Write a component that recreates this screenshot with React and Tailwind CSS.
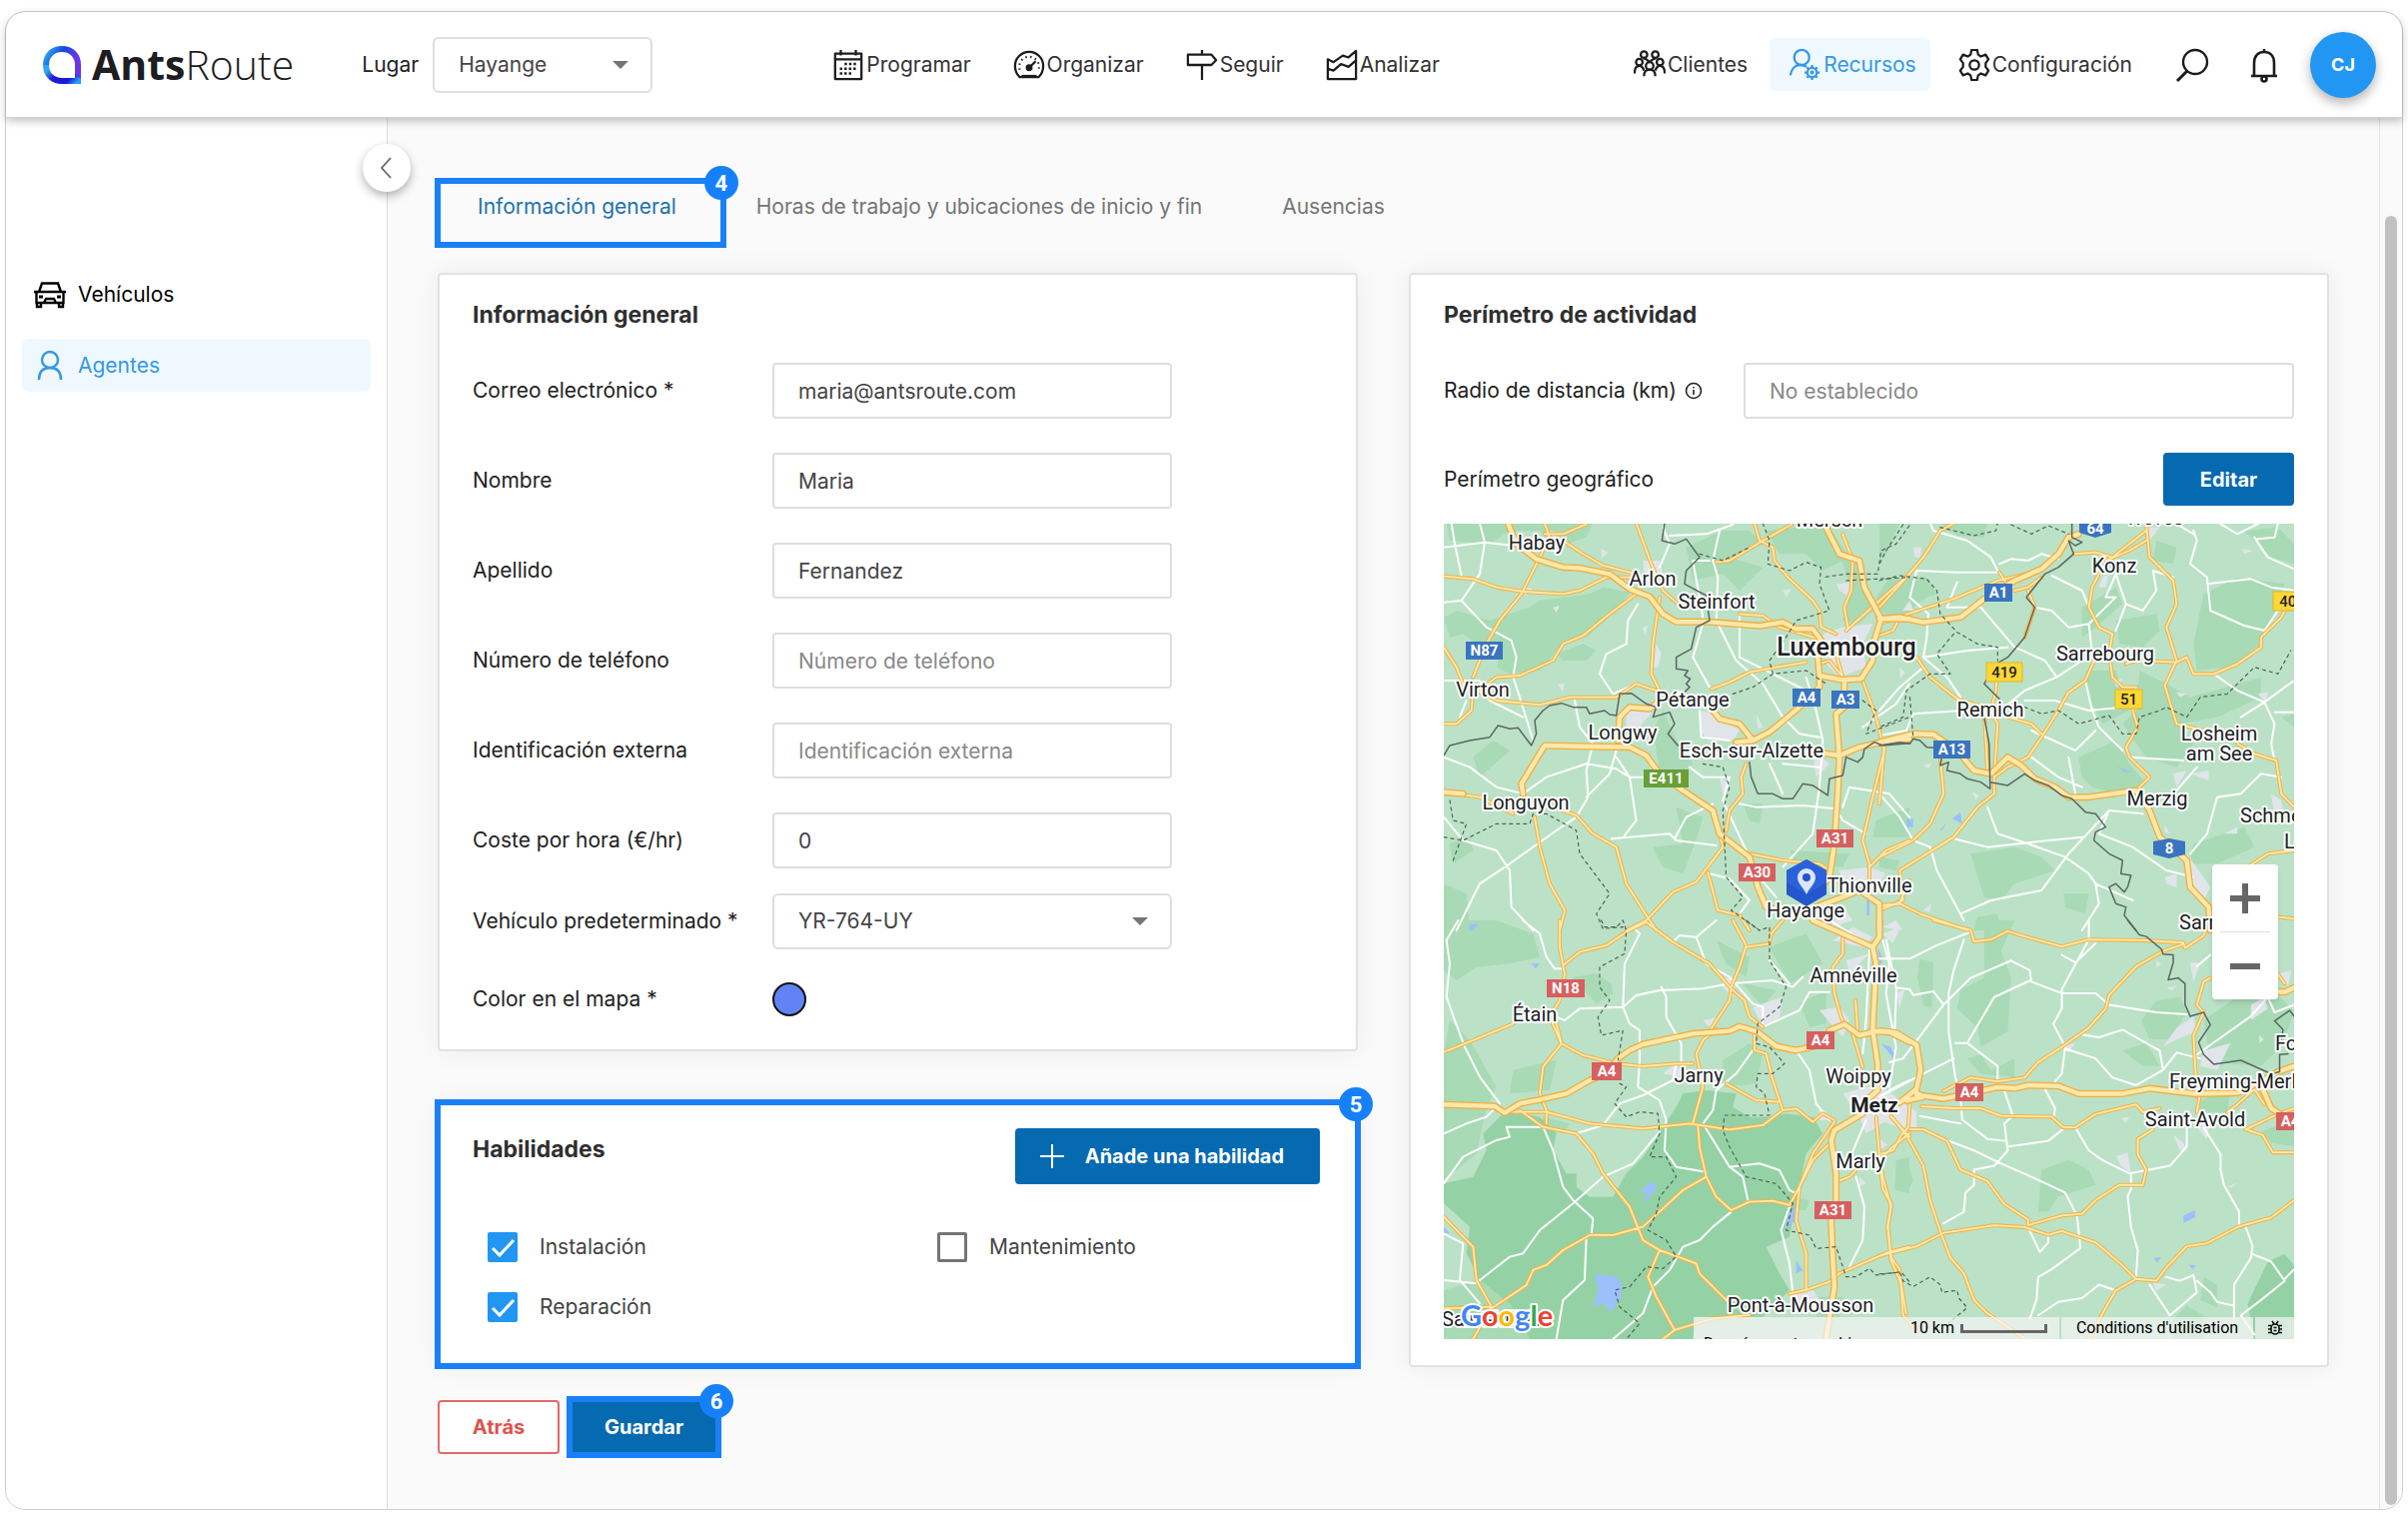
const fields = [
  { id: 'email', label: 'Correo electrónico *', type: 'email', value: 'maria@antsroute.com' },
  { id: 'nombre', label: 'Nombre', type: 'text', value: 'Maria' },
  { id: 'apellido', label: 'Apellido', type: 'text', value: 'Fernandez' },
  { id: 'telefono', label: 'Número de teléfono', type: 'tel', placeholder: 'Número de teléfono' },
  { id: 'externa', label: 'Identificación externa', type: 'text', placeholder: 'Identificación externa' },
  { id: 'coste', label: 'Coste por hora (€/hr)', type: 'text', value: '0' },
];

const skills = [
  { id: 'instalacion', label: 'Instalación', checked: true },
  { id: 'mantenimiento', label: 'Mantenimiento', checked: false },
  { id: 'reparacion', label: 'Reparación', checked: true },
];

// The map is drawn in four quadrants, each in its own coordinate space
const tiles = [
  {
    transform: 'translate(-14 -13) scale(.3333 .3333)',
    woods:
      'M50 38H490L470 80 380 110 330 60 240 60 180 100 60 90Z M300 290L330 270 480 250 520 230 600 245 560 300 470 380 400 400 330 480 240 490 200 470 220 400 150 410 100 370 60 380 42 320 80 300 180 330Z M770 110L880 60 960 60 1000 100 900 140 1000 170 930 240 880 190 790 210Z M1010 60L1100 50 1200 50 1260 140 1180 180 1130 130 1050 130Z M1230 130L1290 150 1300 230 1330 300 1290 340 1240 330 1260 220Z M1380 200H1440V320L1360 310 1340 260Z M700 600L740 690 790 760 740 830 690 780 670 660Z M940 880L1000 880 990 940 960 930Z M740 890L820 920 800 990 760 1090 700 1070 670 1010 760 1000Z M1340 930L1440 890V980L1330 980Z M42 1120L110 1150 120 1260H42Z M60 1000L120 980 130 1020 70 1060Z M1080 1020L1260 1030 1240 1070 1100 1060Z M130 740L190 690 240 720 150 800Z M380 430L460 400 500 420 470 450 400 450Z',
    park: '',
    water: 'M1430 930L1440 920V950Z M115 1250L145 1240 130 1260H118Z M1312 1160H1320V1215H1312Z',
    urban:
      'M640 150L690 150 710 230 650 230Z M1180 370L1240 350 1330 340 1300 400 1310 470 1230 500 1190 460Z M590 600L670 600 720 520 690 580 620 660 590 660Z M810 600L860 610 930 660 910 690 830 680 810 660Z M1230 1080L1320 1070 1370 1090 1320 1150 1240 1130Z M1150 720L1200 760 1160 800Z M1220 220L1270 215 1260 260 1230 240Z M515 115L535 125 515 145Z M370 290L390 285 380 305Z M640 350L655 345 645 375Z M680 400L695 430 685 470 672 470Z M385 520L405 520 398 545Z M360 60L385 65 370 90Z M980 610L1000 650 985 655Z M870 800L900 820 880 850Z M1060 240L1085 235 1070 260Z M1205 1250L1240 1190 1270 1230Z M285 230L310 235 285 255Z',
    minor:
      'M65 38L75 100 95 195 M150 38L165 95 150 190 95 270 42 275 M42 110L165 95 250 105 M95 270L170 350 245 390 260 440 250 500 270 560 310 690 M42 510L150 510 180 570 280 620 M625 280L595 330 590 400 530 430 510 490 550 550 620 520 M700 50L720 100 690 170 M720 75L830 70 910 42 M870 60L850 150 865 200 860 330 920 450 1000 520 1060 620 1110 670 1170 680 M840 150L790 150 820 320 M930 310V440L1130 540 M820 340L790 440 840 530 M1130 500L1160 600 1180 690 1170 830 1160 900 1150 970 1060 1070 M42 740L120 770 200 830 280 850 350 800 470 760 560 775 600 800 640 800 M435 570L450 650 490 700 470 780 475 860 440 920 380 960 240 1060 150 1120 80 1260 M560 720L540 790 470 860 M560 740L600 800 620 930 585 975 M42 920L100 990 200 1020 240 1080 245 1190 310 1260 M545 985L720 970 740 990 860 1005 M735 985L770 920 850 880 M930 880L980 890 1120 885 1220 895 1240 930 1310 970 M810 600L815 680 900 690 M1240 890L1260 830 1380 850 1440 920 M840 1090L900 1105 960 1170 930 1210 M980 1090L1040 1160 M1440 520L1400 580 1300 650 M1020 760L1060 850 M1060 760L1170 770 M90 620L110 570 M780 770L820 800 900 800 880 870 950 1020',
    roads:
      'M345 38L360 80 320 160 275 250 210 330 170 400 130 500 M345 70L400 70 470 40 M400 90L460 130 520 165 620 190 M42 197L130 205 200 230 280 243 400 250 450 240 530 200 600 200 M620 250L540 310 460 375 400 400 370 450 270 495 200 500 150 540 M42 410L80 470 100 520 200 570 330 583 420 560 560 560 620 520 680 540 690 560 M42 640L80 640 125 600 130 540 M620 38L665 160 700 240 740 275 M690 260L670 400 665 490 690 540 M845 535L900 515 960 485 1040 470 1130 455 M975 38L990 90 1030 110 1035 150 1075 200 1150 270 1170 300 1175 350 1220 370 M860 155L900 150 1000 90 1085 42 M1240 70L1270 150 1265 240 1245 290 1255 350 M1440 190L1350 270 1250 360 M42 845L150 860 250 910 M370 890L440 915 490 970 560 1010 590 1120 660 1230 M315 920L330 1010 360 1120 405 1200 390 1260 M590 1260L650 1230 730 1145 800 1115 880 1010 870 970 M835 1085L865 1200 930 1215 960 1260 M950 760L935 800 940 850 900 900 890 960 M960 1030L1060 1050 1170 1060 1200 1080 M1300 510L1340 620 1365 720 1330 860 1300 990 1320 1060 1320 1140 M1440 990L1370 1020 1320 1070 M1350 1190L1410 1180 1440 1110 M930 310L1000 315 1050 350 1170 385 M1170 460L1200 450 1240 500 1220 430 M660 1230L680 1260',
    highways:
      'M235 38L260 100 320 145 400 170 450 172 540 190 600 235 660 258 700 310 740 334 840 334 990 346 1060 335 1100 355 1150 355 1190 410 1165 440 1170 495 1240 508 1295 505 1330 450 1335 390 1355 325 1440 325 M1190 50L1230 130 1290 150 1305 230 1355 325 M1170 500V530L1110 590 1020 665 970 690 930 640 870 625 830 575 M970 690L920 695 M1245 510V590L1220 610 1230 740 1225 850 1215 1000 1200 1100 1150 1160 M1180 728L1230 735 1290 710 1360 695 1440 685 M280 850L275 820 345 705 480 708 600 710 650 735 690 790 760 840 850 900 870 970 960 1040 985 1130 1010 1190 1070 1200 M565 690L570 620 600 590 660 595 680 580 M1160 1190L1240 1160 1290 1140 1350 1180 1350 1260 M42 845L100 850',
    border:
      'M705 38L697 90 735 100 770 85 810 140 770 180 765 220 830 255 840 330 800 350 785 415 740 440 740 475 775 480 765 495 782 505 770 520 780 530 740 570 M42 735L60 705 120 690 180 680 205 645 240 655 265 652 305 705 320 670 315 630 340 600 360 585 395 578 430 590 470 590 480 610 525 600 540 612 560 615 570 550 605 548 650 580 680 590 670 620 720 605 735 640 715 670 745 705 M960 755L965 800 985 850 1030 850 1060 865 1090 865 1120 820 1150 825 1195 855 1200 805 1240 795 1250 740 1285 755 1300 740 1305 715 1335 695 1360 705 1440 698',
    dashed:
      'M1000 38L1020 90 1015 160 1080 180 1130 155 1175 170 1170 220 1200 300 1150 315 1100 330 1070 380 1020 450 1030 490 1130 480 1190 520 M810 130L880 150 960 110 M1440 45L1400 100 1355 120 1345 190 1250 190 1180 200 M1250 210L1440 200 M910 550L970 530 1030 490 M820 760L880 770 900 830 880 900 890 1100 940 1160 905 1200 990 1260 M42 980L100 990 200 940 300 940 310 910 350 910 440 960 450 1030 540 1150 500 1210 520 1255 580 1250 M60 870L70 930 110 940 70 1050 M1300 570L1340 600 1310 670 1440 620',
  },
  {
    transform: 'translate(436 -13) scale(.338 .3333)',
    woods:
      'M0 38L60 38 20 130 0 150Z M40 220L80 200 140 200 170 250 140 260 60 320 30 300Z M820 90L880 110 870 160 810 150Z M180 38H320L310 80 230 75Z M600 290L700 230 720 280 640 350 600 380Z M700 330L820 310 830 360 780 410 710 400Z M960 250L1060 200 1200 220 1160 330 1130 400 1040 470 940 480 930 400Z M770 480L850 520 920 560 1130 500 1130 560 1000 620 890 640 930 700 880 770 790 740 720 640 760 600Z M610 480L700 480 740 600 660 640 620 560Z M590 740L700 690 740 760 790 820 700 850 630 830 600 800Z M270 1030L400 1010 480 1040 520 1080 400 1120 360 1170 310 1160Z M930 1000L1080 950 1110 1010 1000 1060 920 1060Z M545 1150L620 1150 610 1210 550 1190Z M290 1220L350 1210 360 1260H280Z M1080 60L1180 50 1228 100V160L1160 140Z M1190 620L1228 610V650Z M0 1040L60 1050 50 1080 0 1070Z',
    park: '',
    water: 'M80 930L100 925 100 950 82 948Z M240 905L245 940 215 925Z M178 960L200 935 185 960Z M700 768L750 785 730 785Z',
    urban:
      'M1160 850L1190 870 1200 930 1170 920Z M920 790L975 780 975 810Z M1020 970L1060 950 1060 970Z M845 1100L880 1090 880 1130 850 1120Z M100 110L125 110 120 140 105 140Z M790 50L830 50 800 90Z M660 200L680 190 670 230 650 230Z M1120 550L1150 545 1145 575Z M910 1030L980 1130 960 1170 910 1100Z M870 790L910 780 880 830Z M68 300L90 270 100 300Z M60 470L75 485 62 505Z M880 545L910 550 890 560Z M275 845L295 855 285 868Z M130 765L155 755 145 775Z M845 945L860 970 845 965Z M1075 115L1105 120 1080 130Z M130 1200L155 1180 148 1205Z M690 510L720 505 705 530Z',
    minor:
      'M110 180L230 185 350 185 M150 38L160 60 260 90 330 140 355 190 M355 160L390 145 440 150 480 130 530 145 M110 180L90 260 145 310 140 380 130 440 M130 440L260 420 380 410 M230 215L200 290 300 290 350 350 400 410 490 450 525 500 600 450 M460 290L510 300 560 350 620 340 630 430 M510 195L600 240 620 290 M720 250L700 190 670 260 700 260 620 340 M700 190L730 280 700 360 M730 280L780 300 820 240 810 180 870 200 M930 60L940 90 920 160 970 200 980 300 1080 345 1140 360 1180 300 M970 220L1100 205 1160 230 1228 240 M1110 80L1150 140 1228 175 M880 40L930 70 M1010 40L1060 70 1120 40 M1120 85L1170 80 1180 38 M990 490L1060 540 1140 575 1170 640 1160 700 1170 750 M1140 575L1070 620 M1140 575L1228 510 M1170 605H1228 M525 500L430 540 370 590 250 600 100 610 80 660 0 675 M610 510L630 600 650 650 720 720 M640 660L580 720 450 660 M430 570L520 570 620 600 720 590 M740 740L900 750 M450 740L530 800 600 830 M560 740L580 850 M0 850L60 920 100 990 150 1010 170 1080 250 1230 M320 890L350 970 440 1000 550 1040 620 1090 640 1120 750 1170 M220 985L320 1010 500 990 600 980 M680 900L560 1030 480 1140 330 1170 240 1210 M780 910L680 900 650 970 750 1010 850 1080 930 1100 M880 840L940 770 M920 1030L970 970 1000 860 1070 850 1130 790 1190 800 M640 1120L650 1180 600 1260 M130 470L60 530 0 600 M130 440L200 500 240 560',
    roads:
      'M0 340L100 305 220 265 350 210 480 180 M0 290L80 200 130 140 180 60 220 38 M355 185L375 215 M0 375L40 360 60 320 M110 440L150 500 230 565 310 590 M310 600L320 780 M575 130L640 125 690 140 740 100 790 60 M790 38L800 140 870 210 880 280 850 350 880 450 845 525 880 640 960 660 M650 190L630 230 620 290 650 350 690 370 680 430 690 500 720 530 760 530 750 600 765 650 730 710 740 740 800 800 760 840 M640 440L610 510 560 545 530 600 480 680 440 740 380 770 340 800 M730 460L760 450 880 455 910 440 930 490 990 490 1060 460 1130 410 1130 380 1190 320 1200 300 M380 620L450 640 480 670 M350 480L345 540 330 600 350 640 340 800 340 850 290 890 220 980 60 1080 70 1170 0 1200 M180 740L190 850 150 940 100 990 0 1040 M0 1185L60 1180 120 1210 260 1260 M1060 700L1110 730 1175 750 1190 850 1228 890 M1228 1020L1150 1030 1090 1070 M0 880L15 700 M1180 1220L1228 1225 M430 380L460 290 440 240 M670 150L740 120 790 90 M400 240L440 230 480 200',
    highways:
      'M0 325L60 320 130 335 240 320 310 265 400 210 480 175 530 130 560 80 590 70 M0 695L100 670 160 672 230 720 280 780 330 790 380 740 420 765 460 805 520 830 560 860 620 860 760 840 800 900 830 980 910 1050 920 1130 975 1190 980 1260',
    border:
      'M570 38L570 80 600 95 580 105 560 90 575 130 530 170 490 190 435 260 460 290 430 380 380 440 345 460 310 520 355 565 M310 620L325 700 328 835 300 815 260 805 240 790 200 780 205 755 180 765 185 735 M165 712L140 710 120 690 100 685 90 700 60 695 0 705 M328 815L380 825 430 790 460 810 500 825 540 855 570 865 610 905 640 910 670 950 640 965 635 990 680 1030 720 1050 715 1090 745 1095 735 1130 725 1145 700 1120 680 1130 700 1180 730 1190 725 1215 760 1260',
    dashed:
      'M70 42L20 120 0 160 M180 50L280 75 345 60 350 38 M390 42L450 70 500 45 560 70 M0 210L60 195 140 205 170 240 180 310 230 365 290 400 350 410 350 450 M220 370L170 430 210 490 150 490 80 540 70 620 0 650 M90 560L100 680 M430 590L480 610 530 600 590 640 680 615 720 670 760 670 770 620 830 600 850 590 910 620 950 560 1030 550 1110 470 1180 490 1218 420',
  },
  {
    transform: 'translate(-14 397) scale(.3333 .3333)',
    woods:
      'M42 0H200L310 40 330 110 240 130 140 140 80 180 42 150Z M60 300L120 360 200 500 170 560 140 700 42 780V400Z M430 170L500 160 545 190 550 220 500 250Z M250 450L330 430 380 420 360 510 240 520Z M860 60L960 110 950 170 890 130Z M1020 80L1130 40 1180 130 1080 190Z M940 190L1040 210 1000 260Z M1110 250L1190 210 1190 310 1140 320Z M880 420L960 370 1000 400 980 490 880 500Z M1400 720L1440 710V820L1400 810Z M1170 1130L1240 1130 1230 1190 1160 1190Z M42 1110L150 1080 240 1150 300 1257H42Z M340 590L420 610 400 640 340 620Z M1095 830L1140 840 1130 870 1100 870Z',
    park: 'M160 640L230 570 330 590 380 640 370 690 410 760 440 760 440 800 480 830 550 830 590 760 640 710 700 620 740 560 760 520 830 510 920 520 910 560 960 590 1020 590 1070 580 1150 590 1180 640 1130 700 1100 850 1080 950 1010 980 1050 1060 1080 1110 1000 1190 800 1190 790 1257H300L240 1150 150 1080 110 1000 120 920 42 850V790L130 770 170 690Z',
    water:
      'M495 1060L560 1070 575 1090 575 1130 545 1175 520 1150 490 1160 505 1110Z M660 785L685 800 640 855 650 820 630 815Z M1090 850L1100 900 1065 930Z M1100 1020L1120 1050 1100 1060Z M1385 380L1398 420 1355 370Z M1345 80L1358 110 1350 130Z M305 130L330 130 318 145Z M120 12L145 10 125 30Z M42 920L60 940 42 940Z',
    urban:
      'M1240 520L1310 500 1360 500 1400 530 1390 590 1310 640 1290 590Z M970 260L1060 230 1050 290 1000 320Z M1170 270L1230 260 1260 300 1240 350Z M1270 20L1330 50 1300 80 1210 60Z M1360 40L1410 20 1390 70Z M880 170L920 180 910 230 880 200Z M1090 1120L1150 1110 1190 1170 1130 1170Z M1170 560L1220 600 1170 600Z M1250 120L1320 100 1260 160Z M1290 770L1310 790 1290 800Z M1360 20L1400 0 1420 30Z M700 460L740 430 760 470Z M820 300L870 290 850 330Z',
    minor:
      'M85 0L50 60 60 130 50 230 75 300 105 380 150 470 210 550 M280 0L330 40 350 110 375 145 400 145 M610 20L630 40 585 130 580 260 600 310 630 330 630 420 625 500 690 540 710 600 705 690 740 740 830 755 M380 290L405 300 450 265 580 260 620 225 690 210 820 205 900 190 M695 200L710 230 710 290 755 370 755 430 M860 0L800 50 750 45 730 65 M800 50L830 130 900 170 970 250 1000 260 M900 190L1030 180 1090 200 1120 170 M1000 260L1000 310 M1000 320L1110 270 1140 215 1200 215 M970 390L920 460 860 510 850 570 820 610 M820 610L900 740 940 770 955 840 M900 740L990 730 1050 750 1080 810 1100 820 M740 430L730 480 640 525 570 550 520 615 440 640 M42 640L110 610 170 590 200 560 M42 790L100 710 200 660 240 650 230 620 340 620 370 690 400 800 430 840 490 895 485 945 470 950 465 1080 400 1140 380 1257 M690 635L610 730 520 770 430 850 330 930 280 1000 240 1010 150 1080 M42 940L100 970 90 1080 150 1150 M42 1080L140 1090 M905 875L850 920 810 960 760 980 720 1050 670 1100 640 1180 550 1257 M1080 860L1055 930 1080 1030 1090 1120 M1280 770L1305 860 1300 960 1260 1040 M1310 600L1250 740 M1320 90L1310 300 1300 400 M1360 60L1380 130 1370 220 1400 380 1380 500 M1100 390L1140 450 1160 550 1200 600 M1440 480L1380 510 M1020 120L1080 190 M1200 0L1300 60',
    roads:
      'M390 0L390 80 405 160 390 240 360 290 395 370 340 440 330 520 350 570 350 610 M42 395L130 360 250 310 M380 310L395 370 460 405 560 430 640 438 740 430 790 430 M400 135L450 95 530 75 590 35 650 5 M650 5L730 65 840 130 905 205 945 240 960 290 1000 320 M910 0L950 75 930 140 905 200 900 240 845 325 M950 80L1020 70 1025 40 1060 0 M1240 40L1240 100 1210 140 1215 220 1235 290 1245 312 M1278 240L1285 340 M235 575L350 575 480 610 640 625 780 610 900 628 1000 615 1060 570 1100 565 1150 605 1180 580 1215 600 M270 570L340 620 440 640 490 700 520 760 600 860 640 960 690 990 800 1030 810 1060 890 1140 M790 610L820 500 800 400 820 360 860 325 M805 615L810 680 830 770 860 830 905 870 960 845 1030 842 1080 855 1110 800 M42 890L80 930 130 980 140 1080 185 1160 130 1257 M185 1165L290 1095 310 1050 350 1035 400 990 480 945 550 945 640 920 700 865 760 810 830 770 M1215 605L1150 700 1110 800 1100 900 1130 1000 1130 1110 1080 1120 M1200 670L1150 720 1110 800 M1130 1110L1200 1085 1230 1060 1380 995 1440 980 M690 990L655 1070 680 1130 735 1230 700 1257 M735 1230L850 1195 960 1185 M975 335L975 390 1010 400 1030 480 1050 540 1060 570 M890 490L980 540 1050 545 M1340 590L1350 700 1360 770 1385 860 1375 920 1385 1020 1415 1090 1430 1180 M1385 590L1440 650 M1440 640L1390 680 1360 710 M1220 785L1260 770 1280 750 M1270 340L1300 440 M42 1165L185 1160',
    highways:
      'M42 553L195 558 225 578 270 550 330 538 410 520 480 480 530 460 565 415 600 390 640 372 790 340 900 332 930 318 985 335 1040 378 1100 390 1190 370 1200 330 1245 312 1290 345 1340 333 1380 335 1440 365 M1150 0L1240 40 1330 80 1340 130 1335 230 1330 330 1345 430 1345 510 1300 550 M1350 0L1350 50 1330 80 M1300 580L1215 630 1205 660 1220 760 1220 850 1205 900 1210 1010 1215 1100 1190 1257',
    border: '',
    dashed:
      'M515 0L525 20 560 20 580 0 590 30 585 100 510 140 510 200 540 240 505 290 515 345 580 330 565 420 M570 490L590 500 555 550 590 590 630 575 685 580 690 640 660 710 710 710 740 770 690 830 680 880 655 930 710 960 740 1010 700 1045 650 1040 600 1100 555 1110 570 1160 630 1210 590 1257 M950 0L990 30 1020 20 1020 120 1070 200 1050 260 985 310 980 370 1020 380 1065 430 1030 460 985 460 980 500 1005 520 1020 585 885 585 880 630 900 680 950 770 1040 790 1090 850 1070 930 1140 945 1160 985 1220 980 1250 1070 1280 1070 1320 1045 1340 1065 1415 1055 1440 1085',
  },
  {
    transform: 'translate(436 397) scale(.338 .3837)',
    woods:
      'M310 0H400L360 80 390 150 380 290 300 330 290 280 230 230 240 180 310 150Z M120 100L160 110 155 230 130 220 112 150Z M260 360L300 350 330 390 400 360 400 410 300 400Z M820 210L890 200 910 240 860 310 800 310 775 260Z M960 260L1060 200 1150 160 1228 240 1190 330 1130 380 980 370Z M720 340L790 320 830 380 780 380Z M480 650L560 625 620 650 640 690 530 720 500 760 470 760Z M50 640L80 620 100 680 80 710 45 700Z M950 470L1040 440 1030 500 950 500Z M1130 550L1228 520V590L1160 580Z M870 1040L910 1005 960 1030 960 1092H870Z M960 930L1000 950 1000 1010 950 990Z',
    park: 'M1150 890L1200 870 1228 900V1092H1110L1090 1000Z',
    water: 'M900 770L935 755 935 775 900 790Z M812 880L834 878 822 893Z M915 897L937 900 928 910Z M0 80L8 110 0 115Z M5 322L45 345 42 375 35 350Z',
    urban:
      'M0 440L60 470 110 500 110 540 60 540 0 520Z M540 330L580 320 560 345Z M840 330L880 280 930 250 940 290 880 310Z M700 615L735 605 745 660 715 640Z M870 560L900 580 910 600 890 600Z M930 520L980 510 970 570 940 540Z M1100 220L1140 200 1150 230 1100 260Z M960 340L1040 320 1000 390 950 380Z M1180 140L1220 130 1210 170Z M920 110L950 110 930 160Z M810 945L850 950 820 965Z M50 190L75 180 60 230Z M30 30L60 25 45 50Z M718 515L740 513 728 530Z M1030 695L1065 683 1040 697Z M820 105L835 115 820 122Z M850 175L880 172 865 182Z M0 570L25 585 0 600Z M1125 300L1138 310 1125 320Z',
    minor:
      'M0 100L90 100 170 65 270 30 M250 50L220 130 205 190 205 290 225 410 M20 50L50 180 45 300 M50 175L90 180 100 195 160 185 190 220 M270 150L190 220 130 290 70 360 30 370 M270 150L390 105 445 130 450 160 510 180 540 190 640 190 680 220 820 240 910 245 M450 155L340 200 260 320 M620 0L620 50 540 180 540 230 515 270 550 330 540 400 520 420 M600 298L650 305 720 285 830 340 840 390 760 430 M550 335L640 360 690 410 760 430 M225 320L260 320 350 380 350 420 M0 460L130 400 220 360 M225 410L240 460 245 520 320 570 370 575 M370 445L395 510 370 530 380 600 340 640 280 650 280 690 255 710 250 760 190 790 M380 590L500 575 550 540 M580 540L620 600 660 625 740 660 860 640 910 590 910 540 M490 440L520 490 515 520 545 540 M205 575L280 600 350 630 440 665 550 710 585 770 595 855 510 910 470 930 465 990 445 1040 M745 665V700L735 720 745 800 765 860 760 930 M960 540L1010 610 1010 650 1020 690 1065 760 1065 800 M1085 800L1105 850 1100 880 1050 950 1050 1040 M850 930L890 940 930 925 940 970 860 1030 M800 950L860 1030 M440 800L475 865 500 840V820 M470 1030L530 995 600 985 650 950 700 965 M1105 870L1160 890 1200 940 1130 990 1070 1030 1110 1080 M1200 935L1228 910 M940 940L980 970 1000 995 1050 1005 M940 350L1100 250 1150 200 1170 240 1228 220 M840 390L880 345 950 360 M540 90L580 110 640 60 M940 120L980 90 M120 510L240 530',
    roads:
      'M160 0L270 25 280 55 330 50 380 28 430 42 540 68 620 50 780 52 900 58 905 72 960 40 975 0 M900 62L840 80 760 120 680 195 670 230 620 280 540 330 470 370 430 410 350 420 270 410 190 445 M125 485L220 490 300 490 360 510 510 512 545 540 580 540 640 505 760 480 780 500 830 490 M90 480L85 540 65 560 40 600 0 610 M35 510L80 560 130 640 150 730 180 810 210 880 250 920 280 990 320 1025 430 1090 M90 545L130 545 200 575 240 650 320 680 370 740 440 780 440 795 540 770 600 765 640 730 710 690 780 690 790 650 765 610 765 570 810 545 M0 875L110 850 190 815 340 795 430 800 500 820 540 810 640 840 720 900 760 935 820 940 850 905 910 850 970 842 1060 800 1160 775 1228 730 M760 935L700 965 670 1010 620 1092 M0 620L10 700 35 740 25 800 35 880 60 910 70 1030 110 1070 M1085 545L1135 560 1165 605H1228 M1085 545L1180 505 1228 490 M940 460L930 300 960 240 940 220 960 160 980 150 M940 500L950 450 M1140 480L1110 440 1060 480 1030 500 M1180 140L1200 165',
    highways:
      'M0 288L50 293 110 325 122 390 110 440 60 475 M110 455L190 465 300 445 350 435 400 438 440 430 530 432 590 452 720 452 800 438 930 452 1060 450 1130 420 1180 395 1228 380 M110 450L130 460 80 470 M1130 430L1160 490 1228 530 M1170 185L1200 187 1228 175',
    border:
      'M735 0L770 38 790 42 835 75 840 88 870 90 870 110 855 155 885 150 905 165 905 220 920 250 960 240 980 272 945 318 960 350 990 375 1070 365 1160 400 1185 395 1185 350 1210 348 M1228 250L1215 235 1170 262 1195 285 1190 310',
    dashed: 'M0 922L60 918 70 940 100 955 150 930 180 950 185 970 230 965 235 985 260 1010 205 1050',
  },
];

const towns = [
  [93, 26, 'Habay'],
  [209, 62, 'Arlon'],
  [273, 85, 'Steinfort'],
  [39, 173, 'Virton'],
  [249, 183, 'Pétange'],
  [179, 216, 'Longwy'],
  [308, 234, 'Esch-sur-Alzette'],
  [82, 286, 'Longuyon'],
  [426, 369, 'Thionville'],
  [362, 394, 'Hayange'],
  [386, 3, 'Mersch'],
  [711, 1, 'Trèves'],
  [671, 49, 'Konz'],
  [662, 137, 'Sarrebourg'],
  [547, 193, 'Remich'],
  [776, 217, 'Losheim'],
  [776, 237, 'am See'],
  [714, 282, 'Merzig'],
  [410, 459, 'Amnéville'],
  [91, 498, 'Étain'],
  [255, 559, 'Jarny'],
  [415, 560, 'Woippy'],
  [417, 645, 'Marly'],
  [357, 789, 'Pont-à-Mousson'],
  [752, 603, 'Saint-Avold'],
];

// Towns whose names run past the edge of the map
const edgeTowns = [
  [797, 299, 'Schmelz'],
  [841, 325, 'Lebach'],
  [736, 406, 'Sarrelouis'],
  [832, 527, 'Forbach'],
  [726, 565, 'Freyming-Merlebach'],
  [-2, 803, 'Saint-Mihiel'],
];

const shields = [
  [22, 118, 37, 'N87', '#3a74c0'],
  [349, 165, 28, 'A4', '#3a74c0'],
  [388, 167, 28, 'A3', '#3a74c0'],
  [541, 60, 28, 'A1', '#3a74c0'],
  [490, 217, 37, 'A13', '#3a74c0'],
  [200, 246, 45, 'E411', '#689f38'],
  [373, 306, 37, 'A31', '#d75f5f'],
  [295, 340, 37, 'A30', '#d75f5f'],
  [103, 456, 38, 'N18', '#d75f5f'],
  [148, 539, 30, 'A4', '#d75f5f'],
  [363, 508, 28, 'A4', '#d75f5f'],
  [371, 678, 37, 'A31', '#d75f5f'],
  [512, 560, 28, 'A4', '#d75f5f'],
  [833, 589, 28, 'A4', '#d75f5f'],
];

const yellowShields = [
  [830, 68, 38, '407'],
  [543, 139, 36, '419'],
  [672, 166, 27, '51'],
];

const Layer = ({ name, ...props }) => (
  <g {...props}>
    {tiles.map((tile) => (
      <path key={tile.transform} d={tile[name]} transform={tile.transform} vectorEffect="non-scaling-stroke" />
    ))}
  </g>
);

const MapDrawing = () => (
  <svg
    viewBox="0 0 851 816"
    preserveAspectRatio="xMidYMid slice"
    className="block w-full h-full"
    fontFamily="Roboto, sans-serif"
    role="img"
    aria-label="Mapa"
  >
    <rect width="851" height="816" fill="#bbe2c6" />
    <Layer name="woods" fill="#a8dab5" />
    <Layer name="park" fill="#94d2a5" />
    <Layer name="urban" fill="#e1e5ea" />
    <Layer name="water" fill="#9cc0f9" />
    <g fill="none" strokeLinejoin="round" strokeLinecap="round">
      <Layer name="minor" stroke="#ffffff" strokeWidth="2" />
      <Layer name="roads" stroke="#f2b347" strokeWidth="4" />
      <Layer name="roads" stroke="#fdeab0" strokeWidth="1.8" />
      <Layer name="highways" stroke="#f0ad40" strokeWidth="7" />
      <Layer name="highways" stroke="#fde8a8" strokeWidth="4.4" />
      <Layer name="border" stroke="#5c6662" strokeWidth="1.5" />
      <Layer name="dashed" stroke="#4f6156" strokeWidth="1.2" strokeDasharray="3 4" />
    </g>

    {shields.map(([x, y, w, text, color]) => (
      <g key={`${x}-${y}`}>
        <rect x={x} y={y} width={w} height="18" fill={color} />
        <text x={x + w / 2} y={y + 14} fontSize="15" fontWeight="700" fill="#fff" textAnchor="middle">
          {text}
        </text>
      </g>
    ))}
    {yellowShields.map(([x, y, w, text]) => (
      <g key={text}>
        <rect x={x} y={y} width={w} height="19" fill="#fdd835" stroke="#e0b52c" />
        <text x={x + w / 2} y={y + 15} fontSize="15" fontWeight="500" fill="#222" textAnchor="middle">
          {text}
        </text>
      </g>
    ))}
    <path d="M636 -4H668V9L652 14 636 9Z" fill="#3a74c0" />
    <path d="M710 318L726 315 742 318V331L726 335 710 331Z" fill="#3a74c0" />
    <g fontSize="15" fontWeight="700" fill="#fff" textAnchor="middle">
      <text x="652" y="10">64</text>
      <text x="726" y="330">8</text>
    </g>

    <g fontSize="20" fill="#202124" stroke="#ffffff" strokeWidth="4" strokeLinejoin="round" paintOrder="stroke">
      {edgeTowns.map(([x, y, name]) => (
        <text key={name} x={x} y={y}>
          {name}
        </text>
      ))}
      {towns.map(([x, y, name]) => (
        <text key={name} x={x} y={y} textAnchor="middle">
          {name}
        </text>
      ))}
      <text x="403" y="132" fontSize="25" fontWeight="500" textAnchor="middle">
        Luxembourg
      </text>
      <text x="431" y="589" fontSize="21" fontWeight="700" textAnchor="middle">
        Metz
      </text>
    </g>

    {/* Home marker */}
    <path d="M363 336L383 347V371L363 383 343 371V347Z" fill="#2456cc" />
    <path d="M363 336L383 347V359L363 371 343 359V347Z" fill="#2b62dc" />
    <path d="M363 345a9 9 0 0 1 9 9c0 6-6 10-9 17c-3-7-9-11-9-17a9 9 0 0 1 9-9Z" fill="#dde6fb" />
    <circle cx="363" cy="354" r="4" fill="#2456cc" />

    <text
      x="17"
      y="803"
      fontSize="29"
      fontWeight="700"
      fontFamily="Lato, sans-serif"
      stroke="#ffffff"
      strokeWidth="4"
      strokeLinejoin="round"
      paintOrder="stroke"
    >
      <tspan fill="#4285f4">G</tspan>
      <tspan fill="#ea4335">o</tspan>
      <tspan fill="#fbbc04">o</tspan>
      <tspan fill="#4285f4">g</tspan>
      <tspan fill="#34a853">l</tspan>
      <tspan fill="#ea4335">e</tspan>
    </text>
  </svg>
);

const Logo = () => (
  <a href="#" className="flex items-center gap-2.5 font-['Open_Sans',sans-serif] text-[41px] leading-none text-[#1d1d22]">
    <svg className="w-10 h-10" viewBox="0 0 40 40" fill="none">
      <defs>
        <linearGradient id="logo" x1="0" y1="0" x2="1" y2="0.3">
          <stop offset="0" stopColor="#2fb5f5" />
          <stop offset="0.5" stopColor="#1649e0" />
          <stop offset="1" stopColor="#6a35e8" />
        </linearGradient>
        <linearGradient id="logoBase" x1="0" y1="0.5" x2="1" y2="1">
          <stop offset="0" stopColor="#2fa5f5" />
          <stop offset="0.3" stopColor="#1a1bd8" />
          <stop offset="0.75" stopColor="#1a1bd8" />
          <stop offset="1" stopColor="#28a0f2" />
        </linearGradient>
      </defs>
      <path d="M4 20C4 10 11 4 20 4s16 6 16 16" stroke="url(#logo)" strokeWidth="6" />
      <path d="M36 19V36H20C11 36 4 30 4 20" stroke="url(#logoBase)" strokeWidth="6" />
      <path d="M33 19H39V34L33 29Z" fill="#6a35e8" />
    </svg>
    <span>
      <span className="font-bold">Ants</span>
      <span className="font-light">Route</span>
    </span>
  </a>
);

const icons = {
  calendar: (
    <>
      <path d="M3 5H31V32H3ZM3 11H31M9 1V7M25 1V7" />
      <path d="M13 16H27M8 21H27M8 26H22" strokeWidth="2.600" strokeDasharray="2.600 2.200" />
    </>
  ),
  gauge: (
    <>
      <path d="M7 30C3 26 2 22 2 18a15 15 0 0 1 30 0c0 4-1 8-5 12Z" />
      <path d="M9 29H25" strokeWidth="3" />
      <path d="M17 20L24 13" strokeWidth="2.400" />
      <circle cx="17" cy="20" r="2.500" fill="currentColor" />
      <path d="M7 22A10.500 10.500 0 1 1 27 22" strokeWidth="2.200" strokeDasharray="1.500 3.700" />
    </>
  ),
  sign: <path d="M2 6H27L32 12 27 17H2ZM17 1V6M17 17V33" />,
  chart: <path d="M2 11L8 14 18 7 24 9 32 2V32H2ZM2 21L8 23 16 16 24 19 32 12" />,
  people: (
    <>
      <circle cx="11" cy="6" r="3.500" />
      <circle cx="23" cy="6" r="3.500" />
      <circle cx="6" cy="14" r="3.500" />
      <circle cx="28" cy="14" r="3.500" />
      <circle cx="17" cy="18" r="4" />
      <path d="M1 26C1 21 3 18 6 18s4 2 5 5M33 26c0-5-2-8-5-8s-4 2-5 5M11 29c0-5 2-7 6-7s6 2 6 7M10 10c3 0 5 2 7 4M24 10c-3 0-5 2-7 4" />
    </>
  ),
  agentGear: (
    <>
      <circle cx="13" cy="9" r="8" />
      <path d="M1 28C2 21 6 17 11 17c3 0 5 0 7 2" />
      <circle cx="24" cy="25" r="5" />
      <circle cx="24" cy="25" r="1" />
      <path d="M24 17V20M24 30V33M16 25H19M29 25H32M18.500 19.500L20.500 21.500M27.500 28.500L29.500 30.500M29.500 19.500L27.500 21.500M20.500 28.500L18.500 30.500" />
    </>
  ),
  gear: (
    <>
      <path d="M14 1H20L21 6 24 8 29 6 32 11 29 15V19L32 23 29 28 24 26 21 28 20 33H14L13 28 10 26 5 28 2 23 5 19V15L2 11 5 6 10 8 13 6Z" />
      <circle cx="17" cy="17" r="5" />
    </>
  ),
};

const NavItem = ({ icon, active, children }) => (
  <a
    href="#"
    className={`flex items-center gap-0.5 h-[53px] pl-5 pr-3.5 rounded-md text-[21px] ${
      active ? 'bg-[#eff8ff] text-[#3498e6]' : 'text-[#333]'
    }`}
  >
    <svg
      className={`w-8 h-8 ${active ? '' : 'text-[#1c1c1c]'}`}
      viewBox="0 0 34 34"
      fill="none"
      stroke="currentColor"
      strokeWidth="2.4"
      strokeLinejoin="round"
    >
      {icons[icon]}
    </svg>
    {children}
  </a>
);

const Caret = () => (
  <svg className="absolute right-6 top-1/2 -translate-y-1/2 w-4 h-2 pointer-events-none" viewBox="0 0 16 8" fill="#757575">
    <path d="M0 0H16L8 8Z" />
  </svg>
);

const Header = () => (
  <header className="relative z-10 flex items-center justify-between h-[106px] pl-9 pr-[26px] bg-white rounded-t-[20px] border-b border-[#d5d5d5] shadow-[0_3px_8px_rgba(0,0,0,0.25)]">
    <div className="flex items-center">
      <Logo />
      <label htmlFor="lugar" className="ml-[68px] mr-3.5 text-[21px] text-[#222]">
        Lugar
      </label>
      <div className="relative">
        <select
          id="lugar"
          className="appearance-none w-[220px] h-14 pl-6 pr-12 bg-white border-2 border-[#dedede] rounded-md text-[21px] text-[#444]"
        >
          <option>Hayange</option>
        </select>
        <Caret />
      </div>
    </div>

    <nav className="flex items-center gap-2">
      <NavItem icon="calendar">Programar</NavItem>
      <NavItem icon="gauge">Organizar</NavItem>
      <NavItem icon="sign">Seguir</NavItem>
      <NavItem icon="chart">Analizar</NavItem>
    </nav>

    <div className="flex items-center">
      <nav className="flex items-center gap-2">
        <NavItem icon="people">Clientes</NavItem>
        <NavItem icon="agentGear" active>
          Recursos
        </NavItem>
        <NavItem icon="gear">Configuración</NavItem>
      </nav>
      <button type="button" aria-label="Buscar" className="ml-7">
        <svg className="w-9 h-9" viewBox="0 0 36 36" fill="none" stroke="#1c1c1c" strokeWidth="2.4">
          <circle cx="21" cy="15" r="12" />
          <path d="M13 24L3 34" strokeWidth="3" />
        </svg>
      </button>
      <button type="button" aria-label="Notificaciones" className="ml-9">
        <svg className="w-9 h-9" viewBox="0 0 36 36" fill="none" stroke="#1c1c1c" strokeWidth="2.6">
          <path d="M5 29H31M8 29V16C8 9 12 5 18 5s10 4 10 11V29M18 5V2" />
          <circle cx="18" cy="32" r="2.500" />
        </svg>
      </button>
      <button
        type="button"
        className="ml-7 w-[66px] h-[66px] rounded-full bg-[#2196f3] text-white text-lg font-bold shadow-[0_5px_12px_rgba(0,0,0,0.3)]"
      >
        CJ
      </button>
    </div>
  </header>
);

const Sidebar = () => (
  <aside className="relative w-[382px] shrink-0 px-4 pt-[150px] bg-white border-r border-[#dcdcdc] rounded-bl-[20px]">
    <nav className="flex flex-col gap-[18px] text-[21px]">
      <a href="#" className="flex items-center gap-3 h-[53px] px-3 text-black">
        <svg className="w-8 h-8" viewBox="0 0 32 32" fill="none" stroke="currentColor" strokeWidth="2.4">
          <path d="M5 13L8 4.500H24L27 13M0 13H32M2.500 13V24H29.500V13M10 24L12 20H20L22 24M3 24V28H7V24M25 24V28H29V24" />
          <path d="M5 18H9M23 18H27" strokeWidth="3" />
        </svg>
        Vehículos
      </a>
      <a href="#" className="flex items-center gap-3 h-[53px] px-3 rounded-md bg-[#eff8ff] text-[#3498e6]">
        <svg className="w-8 h-8" viewBox="0 0 32 32" fill="none" stroke="currentColor" strokeWidth="2.4">
          <circle cx="16" cy="10" r="8" />
          <path d="M5 30C5 22 9 18 16 18s11 4 11 12" />
        </svg>
        Agentes
      </a>
    </nav>
    <button
      type="button"
      aria-label="Contraer menú"
      className="absolute -right-6 top-[26px] flex items-center justify-center w-12 h-12 rounded-full bg-white shadow-[0_4px_10px_rgba(0,0,0,0.3)]"
    >
      <svg className="w-6 h-6" viewBox="0 0 24 24" fill="none" stroke="#666" strokeWidth="1.8">
        <path d="M16 2L7 12 16 22" />
      </svg>
    </button>
  </aside>
);

const Badge = ({ children }) => (
  <span className="absolute -top-[18px] -right-[18px] flex items-center justify-center w-[34px] h-[34px] rounded-full bg-[#1680fb] text-white font-['Roboto',sans-serif] font-bold text-[22px]">
    {children}
  </span>
);

const Callout = ({ number, className }) => (
  <div className={`absolute border-[6px] border-[#1a80f8] pointer-events-none ${className}`}>
    <Badge>{number}</Badge>
  </div>
);

const card = 'bg-white border-2 border-[#e2e2e4] rounded-sm shadow-[0_0_28px_rgba(0,0,0,0.06)]';
const input =
  'h-14 px-6 bg-white border-2 border-[#dedede] rounded-sm text-[21px] text-[#444] placeholder:text-[#888]';

const GeneralInfo = () => (
  <section className={`${card} px-[33px] pt-[26px] pb-8`}>
    <h2 className="text-[23px] leading-7 font-bold text-[#2f2f2f]">Información general</h2>
    <div className="flex flex-col mt-[34px] gap-[34px]">
      {fields.map((field) => (
        <div key={field.id} className="flex items-center">
          <label htmlFor={field.id} className="w-[300px] text-[21px] text-[#222]">
            {field.label}
          </label>
          <input
            id={field.id}
            type={field.type}
            defaultValue={field.value}
            placeholder={field.placeholder}
            className={`w-[400px] ${input}`}
          />
        </div>
      ))}
    </div>
    <div className="flex items-center mt-[25px]">
      <label htmlFor="vehiculo" className="w-[300px] text-[21px] text-[#222]">
        Vehículo predeterminado *
      </label>
      <div className="relative">
        <select
          id="vehiculo"
          className="appearance-none w-[400px] h-14 px-6 bg-white border-2 border-[#dedede] rounded-md text-[21px] text-[#444]"
        >
          <option>YR-764-UY</option>
        </select>
        <Caret />
      </div>
    </div>
    <div className="flex items-center mt-8 h-[36px]">
      <label htmlFor="color" className="w-[300px] text-[21px] text-[#222]">
        Color en el mapa *
      </label>
      <button id="color" type="button" className="w-[34px] h-[34px] rounded-full border-2 border-[#111] bg-[#6183f5]" />
    </div>
  </section>
);

const Skills = () => (
  <section className={`relative ${card} mt-[51px] px-[33px] pt-[24px] pb-[42px]`}>
    <Callout number="5" className="-inset-[5px]" />
    <div className="flex justify-between">
      <h2 className="mt-[7px] text-[23px] leading-7 font-bold text-[#2f2f2f]">Habilidades</h2>
      <button
        type="button"
        className="flex items-center gap-5 h-14 pl-6 pr-9 mr-[3px] rounded-sm bg-[#066ab1] text-white text-xl font-bold"
      >
        <svg className="w-[26px] h-[26px]" viewBox="0 0 26 26" stroke="currentColor" strokeWidth="2">
          <path d="M13 1V25M1 13H25" />
        </svg>
        Añade una habilidad
      </button>
    </div>
    <div className="grid grid-cols-2 gap-x-16 gap-y-[30px] mt-12 pl-[15px]">
      {skills.map((skill) => (
        <div key={skill.id} className="flex items-center gap-[22px]">
          <span className="relative flex">
            <input
              id={skill.id}
              type="checkbox"
              defaultChecked={skill.checked}
              className="peer appearance-none w-[30px] h-[30px] border-3 border-[#757575] rounded-xs checked:bg-[#2196f3] checked:border-[#2196f3]"
            />
            <svg
              className="absolute inset-0 w-[30px] h-[30px] hidden peer-checked:block pointer-events-none"
              viewBox="0 0 30 30"
              fill="none"
              stroke="#fff"
              strokeWidth="3"
            >
              <path d="M5 16L12 23 26 8" />
            </svg>
          </span>
          <label htmlFor={skill.id} className="text-[21px] leading-7 text-[#444]">
            {skill.label}
          </label>
        </div>
      ))}
    </div>
  </section>
);

const ActivityPerimeter = () => (
  <section className={`${card} self-start px-[33px] pt-[26px] pb-[26px]`}>
    <h2 className="text-[23px] leading-7 font-bold text-[#2f2f2f]">Perímetro de actividad</h2>
    <div className="flex items-center mt-[34px]">
      <label htmlFor="radio" className="flex items-center gap-2 w-[300px] shrink-0 text-[21px] text-[#222]">
        Radio de distancia (km)
        <svg className="w-[18px] h-[18px]" viewBox="0 0 18 18" fill="none" stroke="currentColor" strokeWidth="1.6">
          <circle cx="9" cy="9" r="7.500" />
          <path d="M9 8V13M9 5V6.500" />
        </svg>
      </label>
      <input id="radio" type="text" placeholder="No establecido" className={`w-full min-w-0 ${input}`} />
    </div>
    <div className="flex items-center justify-between mt-[34px] mb-[18px]">
      <span className="text-[21px] text-[#222]">Perímetro geográfico</span>
      <button type="button" className="w-[131px] h-[53px] rounded-sm bg-[#066ab1] text-white text-xl font-bold">
        Editar
      </button>
    </div>

    <div className="relative w-full aspect-[851/816] overflow-hidden font-['Roboto',sans-serif]">
      <MapDrawing />
      <div className="absolute right-4 top-[341px] flex flex-col items-center w-[66px] bg-white rounded-sm shadow-md">
        <button type="button" aria-label="Acercar" className="flex items-center justify-center w-full h-[67px]">
          <svg className="w-[30px] h-[30px]" viewBox="0 0 30 30" stroke="#666" strokeWidth="6">
            <path d="M15 0V30M0 15H30" />
          </svg>
        </button>
        <span className="w-[50px] h-px bg-[#e0e0e0]" />
        <button type="button" aria-label="Alejar" className="flex items-center justify-center w-full h-[67px]">
          <svg className="w-[30px] h-[30px]" viewBox="0 0 30 30" stroke="#666" strokeWidth="6">
            <path d="M0 15H30" />
          </svg>
        </button>
      </div>
      <div className="absolute bottom-0 right-0 flex gap-0.5 h-[22px] text-base leading-[22px] text-black">
        <div className="flex w-[366px] pl-2.5 pr-3 bg-[#f5f5f5]/70 overflow-hidden">
          <span className="pt-4">Données cartographiques</span>
          <span className="flex items-center gap-1.5 ml-auto">
            10 km
            <span className="w-[87px] h-[9px] border-3 border-t-0 border-[#666]" />
          </span>
        </div>
        <a href="#" className="w-[192px] text-center bg-[#f5f5f5]/70">
          Conditions d'utilisation
        </a>
        <button type="button" aria-label="Signaler une erreur" className="flex items-center justify-center w-[39px] bg-[#f5f5f5]/70">
          <svg className="w-4 h-4" viewBox="0 0 16 16" fill="none" stroke="#111" strokeWidth="1.6">
            <rect x="4" y="4" width="8" height="10" rx="4" />
            <path d="M5 1L7 4M11 1L9 4M1 5.500H4M12 5.500H15M1 9H4M12 9H15M1 12.500H4M12 12.500H15M6.500 7.500H9.500M6.500 10.500H9.500" />
          </svg>
        </button>
      </div>
    </div>
  </section>
);

const App = () => {
  return (
    <div className="min-h-screen flex flex-col px-[5px] py-[11px] bg-white font-['Inter',sans-serif]">
      <div className="flex-1 flex flex-col border border-[#cfcfcf] rounded-[20px]">
        <Header />
        <div className="flex-1 flex">
          <Sidebar />
          <main className="flex-1 min-w-0 px-[50px] pt-[60px] pb-[52px] bg-[#fafafa]">
            <div className="flex h-[58px] text-[21px] text-[#757575]" role="tablist">
              <div className="relative">
                <button type="button" role="tab" aria-selected="true" className="h-full px-10 text-[#2272ad]">
                  Información general
                </button>
                <Callout number="4" className="-left-[3px] -right-[10px] top-0 -bottom-3" />
              </div>
              <button type="button" role="tab" className="px-10">
                Horas de trabajo y ubicaciones de inicio y fin
              </button>
              <button type="button" role="tab" className="px-10">
                Ausencias
              </button>
            </div>

            <div className="grid grid-cols-2 gap-[51px] mt-[37px]">
              <div>
                <GeneralInfo />
                <Skills />
                <div className="flex gap-[11px] mt-[34px]">
                  <button
                    type="button"
                    className="w-[122px] h-[54px] border-2 border-[#e26a66] rounded-sm bg-white text-[#e0524e] text-xl font-bold"
                  >
                    Atrás
                  </button>
                  <div className="relative">
                    <button type="button" className="w-[147px] h-[54px] bg-[#066ab1] text-white text-xl font-bold">
                      Guardar
                    </button>
                    <Callout number="6" className="-inset-1" />
                  </div>
                </div>
              </div>
              <ActivityPerimeter />
            </div>
          </main>
          <div className="w-[23px] shrink-0 px-[5px] pt-[98px] pb-1 border-l border-[#e4e4e4] bg-[#fafafa] rounded-br-[20px]">
            <div className="h-full rounded-full bg-[#c1c1c1]" />
          </div>
        </div>
      </div>
    </div>
  );
};

export default App;
